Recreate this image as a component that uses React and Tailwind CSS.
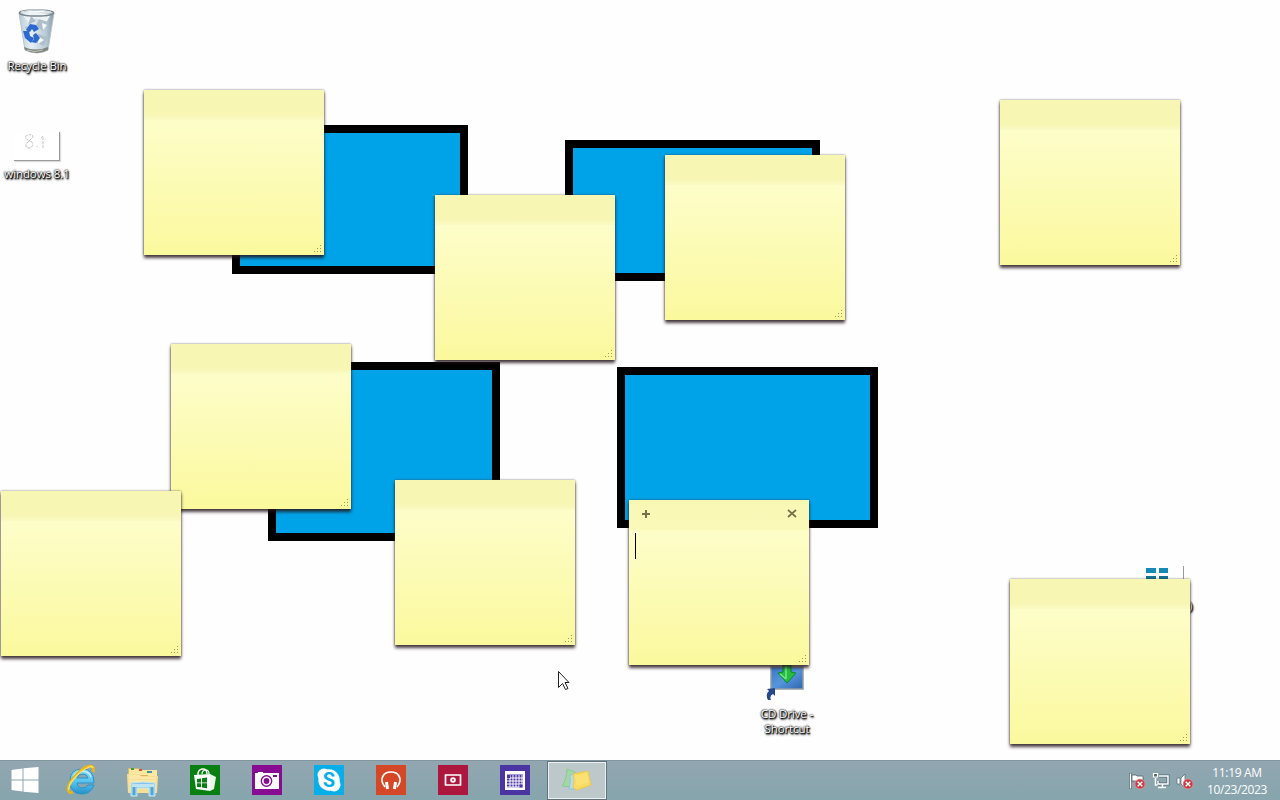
import React from "react";

const frames = [
  "left-[232px] top-[125px] w-[236px] h-[149px]",
  "left-[565px] top-[140px] w-[255px] h-[141px]",
  "left-[268px] top-[362px] w-[232px] h-[179px]",
  "left-[617px] top-[367px] w-[261px] h-[161px]",
];

const notes = [
  "left-[144px] top-[90px]",
  "left-[435px] top-[195px]",
  "left-[665px] top-[155px]",
  "left-[1000px] top-[100px]",
  "left-[171px] top-[344px]",
  "left-[1px] top-[491px]",
  "left-[395px] top-[480px]",
  "left-[1010px] top-[579px]",
];

const labelStyle =
  "text-center text-[11.5px] leading-[15px] tracking-[-0.1px] whitespace-nowrap text-white [text-shadow:0_0_2px_#000,0_0_2px_#000,1px_1px_1px_#000,1px_2px_2px_#222]";

function Note({ place, active }) {
  return (
    <div
      className={`absolute flex h-[165px] w-[180px] flex-col bg-linear-to-b from-[#fdfdc8] from-20% to-[#fbf99d] shadow-[0_3px_3px_rgba(35,20,25,0.8),0_0_2px_rgba(60,50,50,0.65)] ${place}`}
    >
      <div
        className={`flex h-[30px] shrink-0 items-center justify-between px-[12px] pb-[2px] bg-linear-to-b ${
          active ? "from-[#f9f7b4] to-[#faf9b7]" : "from-[#f7f6b2] from-80% to-[#fbfac5]"
        }`}
      >
        {active && (
          <>
            <svg width="10" height="10" viewBox="0 0 10 10" stroke="#77734b" strokeWidth="2">
              <path d="M5 1v8M1 5h8" />
            </svg>
            <svg width="10" height="10" viewBox="0 0 10 10" stroke="#77734b" strokeWidth="1.7">
              <path d="M1 1l8 7M9 1L1 8" />
            </svg>
          </>
        )}
      </div>
      <div className="flex-1 px-[6px] pt-[3px]">{active && <div className="h-[26px] w-px bg-black" />}</div>
      <svg className="mr-[2px] mb-[2px] shrink-0 self-end" width="9" height="8" fill="#a19a60">
        <path d="M7 0h1v1h-1zM4 3h1v1h-1zM7 3h1v1h-1zM1 6h1v1h-1zM4 6h1v1h-1zM7 6h1v1h-1z" />
      </svg>
    </div>
  );
}

function RecycleBin() {
  return (
    <svg width="38" height="46" viewBox="0 0 38 46">
      <defs>
        <linearGradient id="bin" x2="1">
          <stop stopColor="#bacbd5" />
          <stop offset=".35" stopColor="#e5eff5" />
          <stop offset=".75" stopColor="#bbcdd7" />
          <stop offset="1" stopColor="#8599a5" />
        </linearGradient>
      </defs>
      <path d="M1 4l6 37q12 6 23 0l6-37z" fill="url(#bin)" stroke="#b7c4cc" />
      <path d="M4 5l10-3 9 2 10 1-5 9-10-5-8 4z" fill="#eef3f5" />
      <path d="M21 10l9 3-5 9-7-5zM20 25l9 3-3 9-9-4zM13 7l5 5-8 4zM7 18l6-2-4 8z" fill="#aebfca" />
      <path d="M24 14l5 2-4 5zM21 28l5 3-6 4z" fill="#f5fafb" />
      <path d="M6 38q12 5 24 0v3q-11 6-23 0z" fill="#81857e" />
      <path d="M9 41q8 3 16 0" fill="none" stroke="#c2c4bd" />
      <ellipse cx="18.5" cy="4" rx="17" ry="3" fill="none" stroke="#788790" strokeWidth="1.5" />
      <path d="M3 3q15-4 30 0" fill="none" stroke="#dce5e9" />
      <g fill="#2d69cf">
        <path d="M8 21l4-6 6 1 3 4-5 3-2-3-2 3z" />
        <path d="M5 22l6 0 1 5 4 2-3 5-6-5z" />
        <path d="M18 24l4 5-4 5-5-1 3-3-1-4z" />
      </g>
    </svg>
  );
}

function Explorer() {
  return (
    <svg width="32" height="30" viewBox="0 0 32 30">
      <path d="M1 1h11l1 2h17v23H1z" fill="#d9b462" />
      <path d="M2 2h10l1 5H2zM12 3h9v5h-9zM21 3h9v6h-9z" fill="#fae8a2" />
      <path d="M4 1h3v2H4zM20 4h2v2h-2z" fill="#459652" />
      <path d="M12 2h3v2h-3z" fill="#d55334" />
      <path d="M22 4h3v2h-3z" fill="#438fc8" />
      <path d="M0 7h12l2 2h17l-1 17H1z" fill="#f6df94" />
      <path d="M2 9h10l2 2h15M2 11h10M2 14h27" fill="none" stroke="#fff1bb" />
      <path d="M4 16q12-2 24 0v13h-6v-8H10v8H4z" fill="#82c4e5" stroke="#c8eaf5" />
      <path d="M5 17h22v3H5z" fill="#bce4f2" />
      <path d="M7 20v8m18-8v8" stroke="#51a5d1" strokeWidth="2" />
    </svg>
  );
}

function InternetExplorer() {
  return (
    <svg width="34" height="34" viewBox="0 0 34 34" fill="none">
      <defs>
        <linearGradient id="browser" x2="0" y2="1">
          <stop stopColor="#8be0fb" />
          <stop offset=".6" stopColor="#50bceb" />
          <stop offset="1" stopColor="#238fc9" />
        </linearGradient>
      </defs>
      <path
        d="M30 21H13q1 5 5 5 4 0 6-3h6q-3 9-12 9-12 0-12-13Q6 7 18 7q12 0 12 14zM13 16h11q-1-4-5-4-5 0-6 4z"
        fill="url(#browser)"
        fillRule="evenodd"
        stroke="#2695cc"
        strokeWidth="1"
      />
      <path d="M9 18q0-8 9-9 7 0 9 6" stroke="#c0f0ff" strokeWidth="1.3" />
      <path d="M29 10q2-5-2-6-6 0-14 8-9 9-9 16 1 4 5 2" stroke="#e8b51b" strokeWidth="2.8" />
      <path d="M29 6q-1-3-6 0-7 3-14 12Q4 24 5 28" stroke="#ffe463" strokeWidth="1.3" />
    </svg>
  );
}

function Store() {
  return (
    <svg width="30" height="30" viewBox="0 0 30 30">
      <path d="M8 10V8q1-4 5-4 4 0 4 5" fill="none" stroke="#fff" strokeWidth="1.4" />
      <path d="M12 9q0-4 4-4 3 0 3 4" fill="none" stroke="#fff" strokeWidth="1.2" />
      <path d="M4 10l16-1v17L6 24z" fill="#fff" />
      <path d="M20 9l6 3-2 12-4 2z" fill="#e9f6e8" />
      <path d="M7 14l4-.6v4H7zm5-.8l5-.7v5h-5zM7 18.3h4v4L7 22zm5 0h5v5l-5-.8z" fill="#078011" />
    </svg>
  );
}

function Camera() {
  return (
    <svg width="30" height="30" viewBox="0 0 30 30">
      <path d="M3 8h3V7h5v1h16v16H3z" fill="#fff" />
      <circle cx="14.5" cy="16" r="5.2" fill="none" stroke="#870c92" strokeWidth="1.4" />
      <circle cx="14.5" cy="16" r="2.9" fill="#870c92" />
      <path d="M21 10h4v2h-4z" fill="#870c92" />
    </svg>
  );
}

function Skype() {
  return (
    <div className="relative flex h-[30px] w-[30px] items-center justify-center">
      <svg className="absolute inset-0" width="30" height="30" viewBox="0 0 30 30" fill="#fff">
        <circle cx="15" cy="15" r="10.7" />
        <circle cx="10" cy="10" r="6.5" />
        <circle cx="20" cy="20" r="6.5" />
      </svg>
      <span className="relative text-[20px] leading-[22px] font-bold text-[#07aee8] [font-family:Roboto,sans-serif]">S</span>
    </div>
  );
}

function Headphones() {
  return (
    <svg width="30" height="30" viewBox="0 0 30 30" fill="none" stroke="#fff">
      <path d="M9 22q-5-6-2-11 2-4 8-4t8 4q3 5-2 11" strokeWidth="1.7" />
      <path d="M10.5 17l1 7M19.5 17l-1 7" strokeWidth="3" />
    </svg>
  );
}

function Video() {
  return (
    <svg width="30" height="30" viewBox="0 0 30 30">
      <path d="M7.5 10h15v10h-15z" fill="none" stroke="#fff" strokeWidth="1.7" />
      <circle cx="15" cy="15" r="2.8" fill="#fff" />
      <circle cx="15" cy="15" r=".9" fill="#ad173d" />
    </svg>
  );
}

function Calendar() {
  return (
    <svg width="30" height="30" viewBox="0 0 30 30">
      <path d="M5 6h20v19H5z" fill="#fff" />
      <path d="M7 9.5h16v13H7z" fill="#4b35a3" />
      <path d="M10 10v12m3-12v12m3-12v12m3-12v12m3-12v12M7 13h16M7 16h16M7 19h16M7 22h16" stroke="#fff" />
      <path d="M7 10h3v3H7zM19.5 19.5h3v3h-3z" fill="#4b35a3" />
    </svg>
  );
}

function NotesIcon() {
  return (
    <svg width="34" height="28" viewBox="0 0 34 28">
      <path d="M7 3l8 3-3 15-10-1q5-7 5-17z" fill="#a3d8a5" stroke="#8bc995" />
      <path d="M10 9l10-2-1 16H9q2-7 1-14z" fill="#bbdbed" stroke="#92c1da" />
      <path d="M13 8l15-3 3 14-14 5q-3-1-4-3 2-6 0-13z" fill="#f7dc64" stroke="#e9c950" />
      <path d="M15 10l12-3 2 9-12 4z" fill="#fce37a" opacity=".7" />
    </svg>
  );
}

function TileButton({ color, children }) {
  return (
    <div className="flex h-full w-[62px] items-center justify-center pb-[2px]">
      <div className={`h-[30px] w-[30px] ${color}`}>{children}</div>
    </div>
  );
}

function ErrorBadge() {
  return (
    <g>
      <circle cx="12" cy="12" r="5" fill="#c93a45" stroke="#e8a0a4" strokeWidth=".6" />
      <path d="M9.7 9.7l4.6 4.6m0-4.6l-4.6 4.6" stroke="#fff" strokeWidth="1.5" />
    </g>
  );
}

function Tray() {
  return (
    <div className="flex items-center gap-[6px]">
      <svg width="18" height="18" viewBox="0 0 18 18" fill="none">
        <path d="M2.5 1v16" stroke="#52636b" strokeWidth="2.5" />
        <path d="M2.5 1.5v15" stroke="#fff" strokeWidth="1.3" />
        <path d="M4 3h4l1 1h6v6H9L8 9H4z" fill="#fff" stroke="#52636b" strokeWidth=".8" />
        <ErrorBadge />
      </svg>
      <svg width="18" height="18" viewBox="0 0 18 18" fill="none" stroke="#fff">
        <path d="M7 4h9v8H6V9" stroke="#526a75" strokeWidth="3" />
        <path d="M7 4h9v8H6V9M10.5 12v3M6 15.5h8M3.5 6v7h2" strokeWidth="1.5" />
        <path d="M1.5 1.5h4V5h-4z" fill="#536872" strokeWidth="1.2" />
      </svg>
      <svg width="18" height="18" viewBox="0 0 18 18" fill="none">
        <path d="M1 6h3v6H1zM5 6l4-4v14l-4-4z" fill="#fff" stroke="#60737c" strokeWidth=".8" />
        <ErrorBadge />
      </svg>
    </div>
  );
}

function Taskbar() {
  return (
    <footer className="flex h-[40px] w-full border-t border-[#82969f] bg-linear-to-b from-[#92a6b0] to-[#86a5ad]">
      <div className="flex h-full w-[50px] items-center justify-center pb-[2px]">
        <svg width="28" height="28" viewBox="0 0 28 28" fill="#fff">
          <path d="M.5 4l11-1.5v11H.5zM12.5 2.3L27.5 1v12.5h-15zM.5 14.5h11v11L.5 24zM12.5 14.5h15V27l-15-1.3z" />
        </svg>
      </div>
      <div className="flex w-[62px] items-center justify-center pb-[3px]">
        <InternetExplorer />
      </div>
      <div className="flex w-[62px] items-center justify-center pt-[2px]">
        <Explorer />
      </div>
      <TileButton color="bg-[#078011]"><Store /></TileButton>
      <TileButton color="bg-[#870c92]"><Camera /></TileButton>
      <TileButton color="bg-[#07aee8]"><Skype /></TileButton>
      <TileButton color="bg-[#d44727]"><Headphones /></TileButton>
      <TileButton color="bg-[#ad173d]"><Video /></TileButton>
      <TileButton color="bg-[#4b35a3]"><Calendar /></TileButton>
      <div className="ml-px flex h-full w-[60px] items-center justify-center border border-[#60727a] bg-[#bdc8cb] pb-[2px] shadow-[inset_0_0_0_1px_#edf1f1]">
        <NotesIcon />
      </div>
      <div className="ml-auto flex">
        <Tray />
        <div className="w-[86px] pt-[3px] text-center text-[12px] leading-[17px] tracking-[-0.35px] text-white">
          <div>11:19 AM</div>
          <div>10/23/2023</div>
        </div>
      </div>
    </footer>
  );
}

export default function App() {
  return (
    <div className="flex h-screen w-full flex-col overflow-hidden bg-[#fefefe] [font-family:'Open_Sans','Noto_Sans',sans-serif]">
      <main className="relative min-h-0 flex-1">
        {frames.map((place) => (
          <div key={place} className={`absolute border-8 border-black bg-[#00a2e8] ${place}`} />
        ))}

        <div className="absolute top-[9px] left-0 flex w-[74px] flex-col items-center">
          <RecycleBin />
          <div className={`mt-[3px] ${labelStyle}`}>Recycle Bin</div>
        </div>
        <div className="absolute top-[132px] left-0 flex w-[74px] flex-col items-center">
          <div className="flex h-[29px] w-[46px] border-r border-b border-[#999] bg-white pl-[10px] shadow-[1px_1px_1px_#ddd]">
            <svg width="24" height="22" fill="none" stroke="#c4c4c4">
              <path d="M8 10Q0 7 2 4q7-3 7 1L2 12q-1 4 4 4 4-2 2-6M13 14v1M17 6l2-2v12" strokeDasharray="3 1" />
            </svg>
          </div>
          <div className={`mt-[5px] ${labelStyle}`}>windows 8.1</div>
        </div>
        <div className="absolute top-[566px] left-[1142px] h-[14px] w-[42px] border-r border-[#999]">
          <div className="grid grid-cols-2 gap-[3px] pt-[2px] pr-[15px] pl-[4px]">
            <div className="h-[5px] bg-[#1689b6]" />
            <div className="h-[5px] bg-[#1689b6]" />
            <div className="h-[5px] bg-[#127297]" />
            <div className="h-[5px] bg-[#127297]" />
          </div>
        </div>
        <div className={`absolute top-[598px] left-[1189px] ${labelStyle}`}>)</div>
        <div className="absolute top-[661px] left-[750px] flex w-[74px] flex-col items-center">
          <svg width="42" height="40" viewBox="0 0 42 40">
            <defs>
              <linearGradient id="screen" x2="1" y2="1">
                <stop stopColor="#3578c6" />
                <stop offset=".5" stopColor="#5596da" />
                <stop offset="1" stopColor="#2e65ae" />
              </linearGradient>
            </defs>
            <path d="M5 6h32v22H5z" fill="url(#screen)" stroke="#929da4" strokeWidth="1.5" />
            <path d="M17 3h8v8l5 1-9 10-9-10 5-1z" fill="#27bd43" stroke="#12842a" />
            <path d="M20 5v13M14 13l6 5" stroke="#76e787" strokeWidth="1.5" />
            <path d="M2 39q-3-6 1-9l-2-2 8-1v8l-2-2q-4 2-2 6z" fill="#24488b" />
          </svg>
          <div className={`mt-[5px] ${labelStyle}`}>CD Drive -<br />Shortcut</div>
        </div>

        {notes.map((place) => <Note key={place} place={place} />)}
        <Note active place="left-[629px] top-[500px]" />

        <svg className="absolute top-[670px] left-[557px]" width="14" height="21" viewBox="0 0 14 21">
          <path d="M1.5 1.5v16l4-4 3 6 2.5-1-3-6h4z" fill="#fff" stroke="#222" />
        </svg>
      </main>
      <Taskbar />
    </div>
  );
}
